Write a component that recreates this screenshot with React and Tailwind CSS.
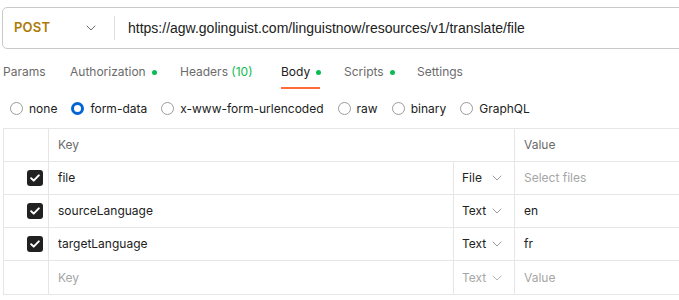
import React from "react";

const Chevron = ({ className = "" }) => (
  <svg width="10" height="6" viewBox="0 0 10 6" className={className} fill="none">
    <path d="M1 1l4 4 4-4" stroke="currentColor" strokeWidth="1" strokeLinecap="round" strokeLinejoin="round" />
  </svg>
);

const Dot = () => <span className="inline-block w-[5px] h-[5px] rounded-full bg-[#0cbb52] ml-[6px]" />;

const Radio = ({ checked, label }) => (
  <label className="flex items-center gap-[6px]">
    {checked ? (
      <span className="w-[13px] h-[13px] rounded-full border-[3px] border-[#0265d2] bg-white" />
    ) : (
      <span className="w-[13px] h-[13px] rounded-full border border-[#9b9b9b] bg-white" />
    )}
    <span className="text-[#212121]">{label}</span>
  </label>
);

const Checkbox = () => (
  <span className="w-[16px] h-[16px] rounded-[3px] bg-[#212121] flex items-center justify-center">
    <svg width="10" height="8" viewBox="0 0 10 8" fill="none">
      <path d="M1.2 4.2l2.5 2.4L8.8 1.4" stroke="white" strokeWidth="2" strokeLinecap="round" strokeLinejoin="round" />
    </svg>
  </span>
);

const rows = [
  { key: "file", type: "File", value: "", checked: true },
  { key: "sourceLanguage", type: "Text", value: "en", checked: true },
  { key: "targetLanguage", type: "Text", value: "fr", checked: true },
];

export default function App() {
  return (
    <div className="w-[679px] h-[300px] bg-white overflow-hidden font-['Inter',sans-serif] text-[12px]">
      {/* request bar */}
      <div className="mt-[7px] ml-[2px] w-[720px] h-[42px] border border-[#c9c9c9] rounded-[5px] flex items-center">
        <div className="w-[111px] h-full flex items-center pl-[11px] pr-[18px] justify-between">
          <span className="text-[#ad7a03] font-semibold text-[13px] tracking-[0.2px]">POST</span>
          <Chevron className="text-[#6b6b6b]" />
        </div>
        <div className="w-px h-[24px] bg-[#e0e0e0]" />
        <span className="ml-[13px] text-[14px] text-[#212121] font-['Liberation_Sans',Arial,sans-serif]">
          https://agw.golinguist.com/linguistnow/resources/v1/translate/file
        </span>
      </div>

      {/* tabs */}
      <div className="mt-[14px] h-[24px] flex items-start pl-[3px] text-[#6b6b6b] text-[12px]">
        <span className="w-[67px]">Params</span>
        <span className="w-[110px] flex items-center">Authorization<Dot /></span>
        <span className="w-[101px]">Headers <span className="text-[#0cbb52]">(10)</span></span>
        <span className="w-[63px] flex flex-col items-start">
          <span className="flex items-center text-[#212121]">Body<Dot /></span>
          <span className="mt-[6px] w-[39px] h-[1.5px] bg-[#ff6c37]" />
        </span>
        <span className="w-[73px] flex items-center">Scripts<Dot /></span>
        <span>Settings</span>
      </div>

      {/* body types */}
      <div className="mt-[7px] h-[29px] flex items-center pl-[10px] gap-[14px] text-[12px]">
        <Radio label="none" />
        <Radio checked label="form-data" />
        <Radio label="x-www-form-urlencoded" />
        <Radio label="raw" />
        <Radio label="binary" />
        <Radio label="GraphQL" />
      </div>

      {/* table */}
      <div className="mt-[5px] ml-[3px] w-[720px] border-t border-l border-[#e6e6e6] text-[12px]">
        <div className="flex h-[33px] border-b border-[#e6e6e6]">
          <div className="w-[45px] border-r border-[#e6e6e6]" />
          <div className="w-[466px] border-r border-[#e6e6e6] flex items-center pl-[9px] text-[#6b6b6b]">Key</div>
          <div className="flex-1 flex items-center pl-[9px] text-[#6b6b6b]">Value</div>
        </div>
        {rows.map((r) => (
          <div key={r.key} className="flex h-[33px] border-b border-[#e6e6e6]">
            <div className="w-[45px] border-r border-[#e6e6e6] flex items-center justify-end pr-[5px]">
              <Checkbox />
            </div>
            <div className="w-[405px] border-r border-[#e6e6e6] flex items-center pl-[9px] text-[#212121]">{r.key}</div>
            <div className="w-[61px] border-r border-[#e6e6e6] flex items-center pl-[8px] gap-[6px] text-[#212121]">
              <span className="w-[24px]">{r.type}</span>
              <Chevron className="text-[#9b9b9b]" />
            </div>
            <div className="flex-1 flex items-center pl-[9px]">
              {r.value ? <span className="text-[#212121]">{r.value}</span> : <span className="text-[#a6a6a6]">Select files</span>}
            </div>
          </div>
        ))}
        <div className="flex h-[34px] border-b border-[#e6e6e6]">
          <div className="w-[45px] border-r border-[#e6e6e6]" />
          <div className="w-[405px] border-r border-[#e6e6e6] flex items-center pl-[9px] text-[#a6a6a6]">Key</div>
          <div className="w-[61px] border-r border-[#e6e6e6] flex items-center pl-[8px] gap-[6px] text-[#a6a6a6]">
            <span className="w-[24px]">Text</span>
            <Chevron className="text-[#b5b5b5]" />
          </div>
          <div className="flex-1 flex items-center pl-[9px] text-[#a6a6a6]">Value</div>
        </div>
      </div>
    </div>
  );
}
